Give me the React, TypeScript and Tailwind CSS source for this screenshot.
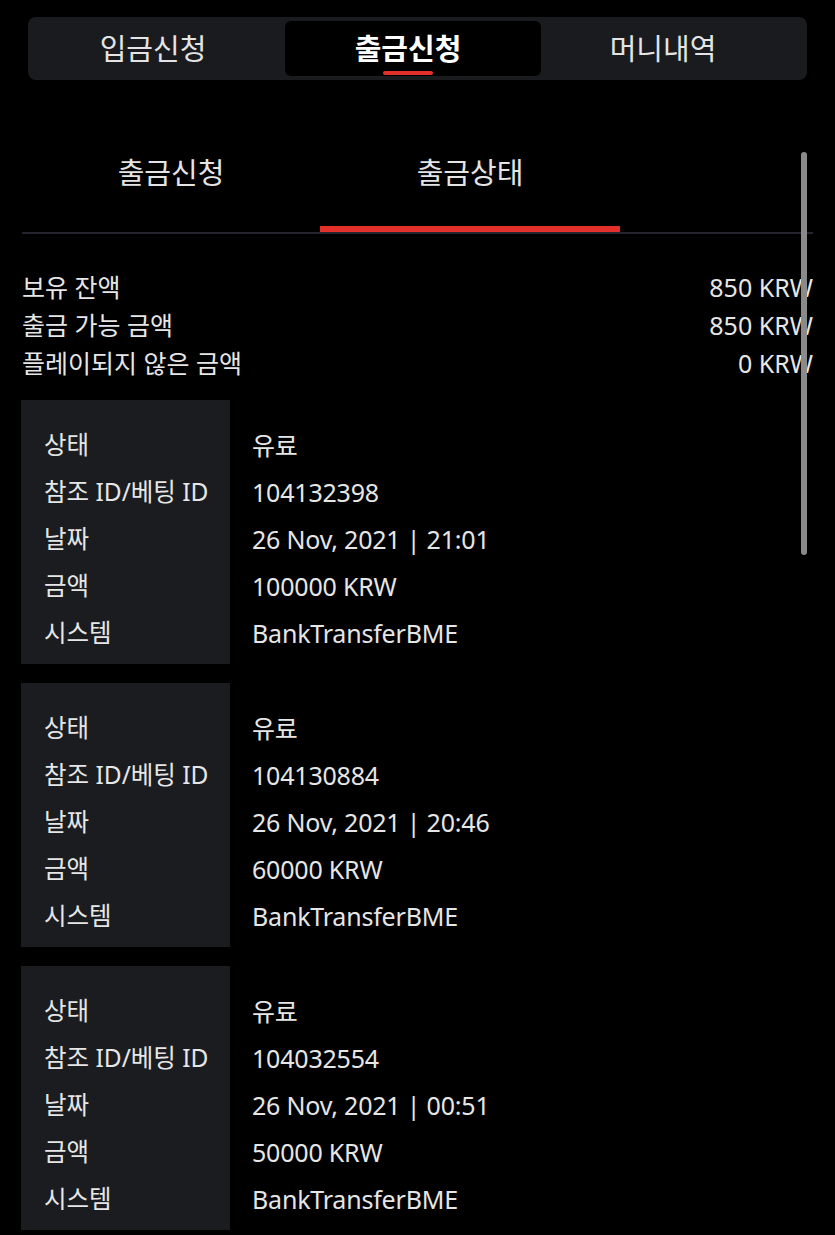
import React from "react";

const font = { fontFamily: '"Noto Sans", "Noto Sans CJK KR", sans-serif' };

const records = [
  { id: "104132398", date: "26 Nov, 2021 | 21:01", amount: "100000 KRW" },
  { id: "104130884", date: "26 Nov, 2021 | 20:46", amount: "60000 KRW" },
  { id: "104032554", date: "26 Nov, 2021 | 00:51", amount: "50000 KRW" },
];

type Rec = { id: string; date: string; amount: string };

function Card({ r }: { r: Rec }) {
  const rows: [string, string][] = [
    ["상태", "유료"],
    ["참조 ID/베팅 ID", r.id],
    ["날짜", r.date],
    ["금액", r.amount],
    ["시스템", "BankTransferBME"],
  ];
  return (
    <div className="flex">
      <div className="w-[209px] bg-[#1b1c20] pt-[22px] pb-[7px] pl-[23px]">
        {rows.map(([l]) => (
          <div key={l} className="h-[47px] flex items-center text-[24.5px] text-[#e6e6e6]">
            {l}
          </div>
        ))}
      </div>
      <div className="pt-[22px] pb-[7px] pl-[22px]">
        {rows.map(([l, v]) => (
          <div key={l} className="h-[47px] flex items-center text-[25px] text-[#e6e6e6] tracking-[-0.2px]">
            {v}
          </div>
        ))}
      </div>
    </div>
  );
}

export default function App() {
  return (
    <div className="w-[835px] h-[1235px] bg-black overflow-hidden relative" style={font}>
      {/* top segmented tabs */}
      <div className="pt-[17px] px-[28px]">
        <div className="h-[63px] bg-[#1a1b1f] rounded-[8px] flex items-stretch py-[4px]">
          <div className="w-[257px] flex items-center justify-center pr-[7px] text-[29px] text-[#e4e4e4]">
            입금신청
          </div>
          <div className="w-[256px] bg-black rounded-[6px] flex items-center justify-center pr-[10px] text-[29px] font-bold text-white">
            <span className="relative">
              출금신청
              <span className="absolute bottom-[-5px] left-1/2 -translate-x-1/2 w-[50px] h-[4px] rounded-full bg-[#e3302a]" />
            </span>
          </div>
          <div className="flex-1 flex items-center justify-center pr-[22px] text-[29px] text-[#e4e4e4]">
            머니내역
          </div>
        </div>
      </div>

      {/* sub tabs */}
      <div className="mt-[58px] mx-[22px] border-b-2 border-[#24242e] flex">
        <div className="w-[298px] h-[94px] flex items-start justify-center pt-[13px] text-[29px] text-[#e4e4e4]">
          출금신청
        </div>
        <div className="w-[300px] h-[94px] relative flex items-start justify-center pt-[13px] text-[29px] text-[#e4e4e4]">
          출금상태
          <div className="absolute left-0 right-0 bottom-0 h-[6px] bg-[#e3302a]" />
        </div>
      </div>

      {/* summary */}
      <div className="mt-[35px] mx-[22px] text-[25px] text-[#e6e6e6]">
        <div className="h-[38px] flex items-center justify-between">
          <span>보유 잔액</span>
          <span>850 KRW</span>
        </div>
        <div className="h-[38px] flex items-center justify-between">
          <span>출금 가능 금액</span>
          <span>850 KRW</span>
        </div>
        <div className="h-[38px] flex items-center justify-between">
          <span>플레이되지 않은 금액</span>
          <span>0 KRW</span>
        </div>
      </div>

      {/* records */}
      <div className="mt-[17px] ml-[21px] flex flex-col gap-[19px]">
        {records.map((r) => (
          <Card key={r.id} r={r} />
        ))}
      </div>

      {/* scrollbar */}
      <div className="absolute left-[801px] top-[152px] w-[6px] h-[403px] rounded-full bg-[#8a8a8a]" />
    </div>
  );
}
